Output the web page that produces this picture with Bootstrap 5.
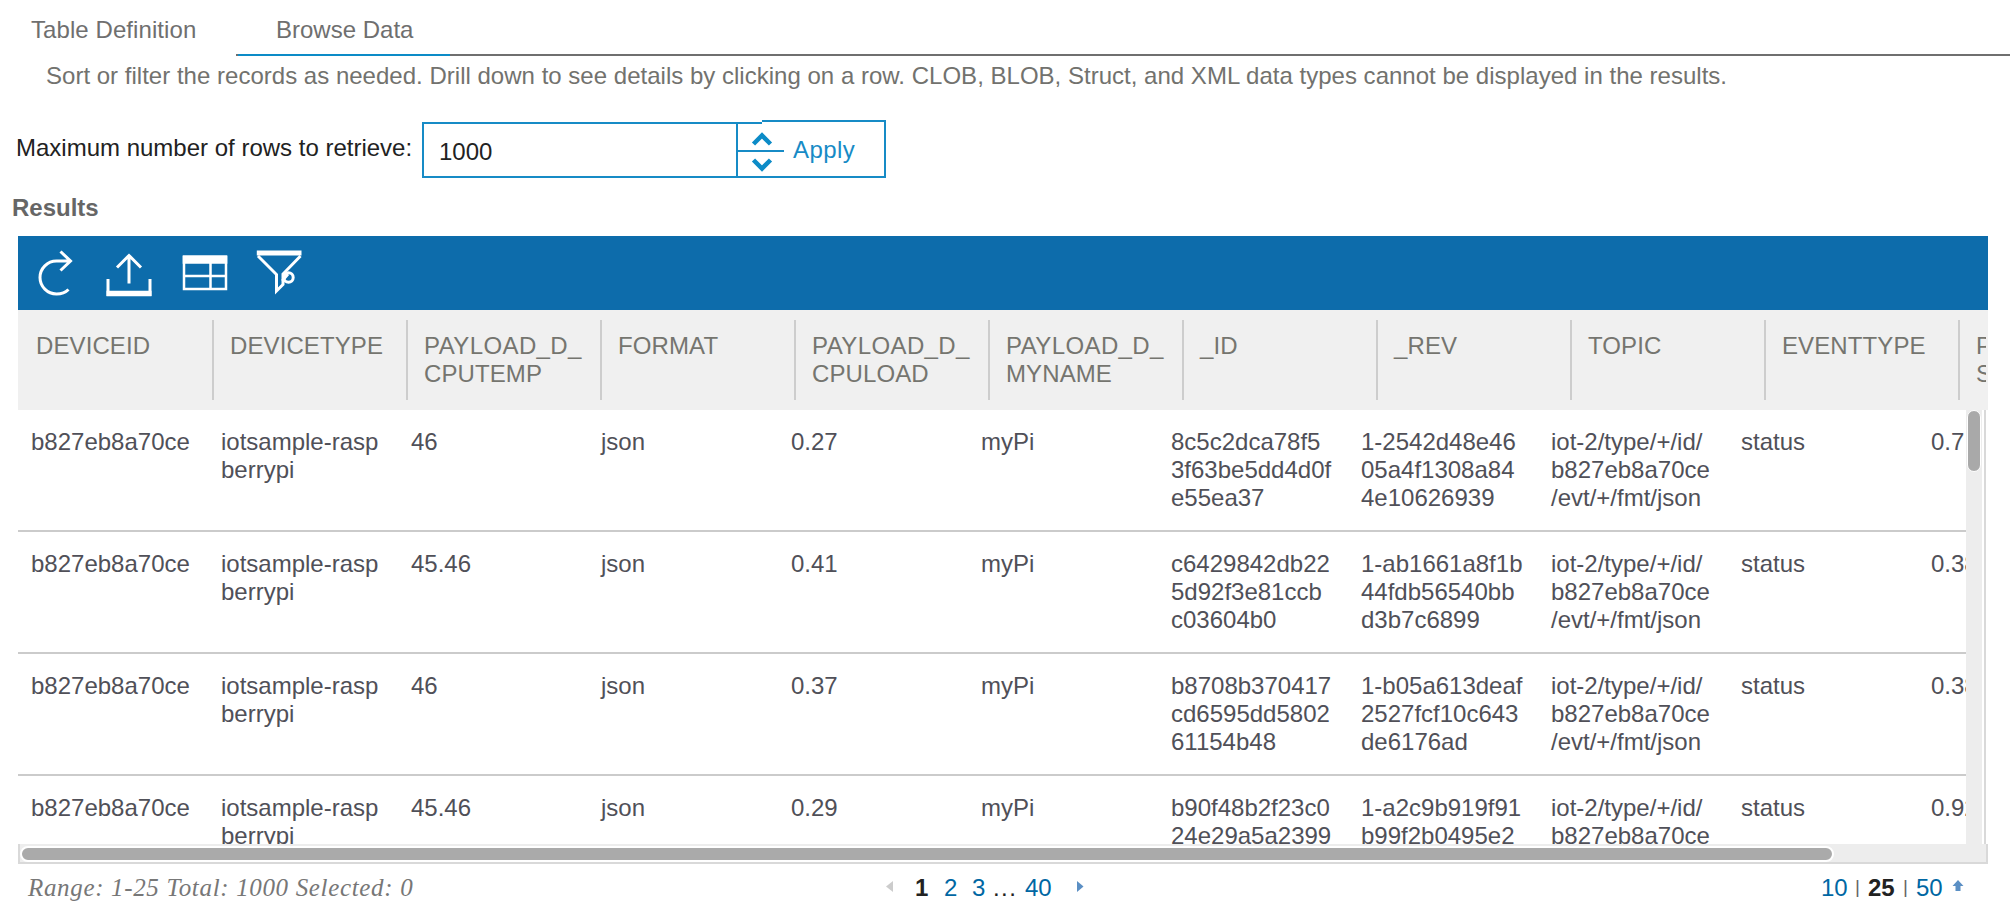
<!DOCTYPE html>
<html lang="en">
<head>
<meta charset="utf-8">
<title>Browse Data</title>
<link rel="stylesheet" href="https://cdn.jsdelivr.net/npm/bootstrap@5.3.0/dist/css/bootstrap.min.css">
<script src="https://cdn.jsdelivr.net/npm/bootstrap@5.3.0/dist/js/bootstrap.bundle.min.js"></script>
<style>
body{font-family:"Liberation Sans",Arial,sans-serif;font-size:24px;line-height:28px;color:#222;background:#fff;height:920px;overflow:hidden}
svg{display:block}
.tabbar{height:56px;--bs-nav-link-padding-x:0;--bs-nav-link-padding-y:0}
.tabbar .nav-link{color:#6f6f6f;font-size:24px;line-height:28px;height:56px;padding-top:16px}
.tab-def{width:236px;padding-left:31px!important;letter-spacing:.08px}
.tab-rest{border-bottom:2px solid #6f6f6f;padding-left:2px}
.tab-data{width:212px;border-bottom:2px solid #0c8bc7!important;padding-left:38px!important}
.hint{padding:6px 0 0 46px;color:#72726e;height:64px;white-space:nowrap;letter-spacing:.015px}
.retrieve{height:60px;padding-left:16px}
.retrieve label{width:406px;padding-top:14px;white-space:nowrap}
.num-box{width:316px;height:56px;margin-top:2px;border:2px solid #178bc6;border-radius:0;padding:4px 0 0 15px;font-size:24px;line-height:28px;color:#222}
.spinner-col{width:24px;height:56px;margin-top:2px;border:2px solid #178bc6;border-width:2px 0}
.btn-apply{width:124px;height:58px;border:2px solid #178bc6;border-left:0;border-radius:0;color:#178bc6;font-size:24px;line-height:28px;padding:1px 0 0 31px;text-align:left;letter-spacing:.4px}
.chev{position:absolute;left:736px;top:120px}
.results{font-size:24px;line-height:28px;color:#666;padding:14px 0 0 12px;height:56px}
.grid-panel{width:1970px;margin-left:18px}
.toolbar{height:74px;background:#0d6cab}
.grid-head{height:100px;background:#f0f0f0;padding:10px 0;width:1970px}
.head-clip{width:1968px;height:80px}
.head-cell{flex:0 0 194px;height:80px;padding:12px 0 0 16px;border-right:2px solid #cdcdcd;color:#75756f;white-space:nowrap;letter-spacing:.1px}
.wide-set{letter-spacing:.4px}
.head-cell:first-child{flex-basis:196px;padding-left:18px}
.grid-body{height:434px}
.rows{width:1948px}
.data-row{height:122px;border-bottom:2px solid #cbcbcb;padding:18px 0 0 13px;color:#505058}
.data-cell{flex:0 0 190px;white-space:nowrap}
.vtrack{width:16px;background:#ededed;padding:0 1px}
.vthumb{width:14px;height:62px;border:1px solid #fff;border-radius:7px;background:#a9a9a9}
.vedge{width:4px;border-right:2px solid #d9d9d9}
.htrack{height:20px;border:2px solid #d9d9d9;border-top:0;background:#ededed;padding-top:2px;background-clip:padding-box}
.hthumb{height:16px;width:1814px;border:2px solid #fff;border-radius:8px;background:#aaa}
.foot{height:52px;padding-top:10px;width:1970px}
.range{width:866px;padding-left:10px;font:italic 25px/28px "Liberation Serif",serif;color:#777;white-space:nowrap}
.range span{letter-spacing:.66px}
.pg{color:#0067a3;text-decoration:none}
.dots{letter-spacing:1.4px}
.sep{font-size:19px;line-height:26px;color:#666;width:13px}
.pager{width:937px}
</style>
</head>
<body>
<nav class="nav tabbar flex-nowrap">
  <a class="nav-link tab-def">Table Definition</a>
  <div class="tab-rest flex-grow-1"><a class="nav-link tab-data">Browse Data</a></div>
</nav>
<p class="hint mb-0">Sort or filter the records as needed. Drill down to see details by clicking on a row. CLOB, BLOB, Struct, and XML data types cannot be displayed in the results.</p>
<div class="retrieve d-flex">
  <label for="max">Maximum number of rows to retrieve:</label>
  <input id="max" class="form-control flex-shrink-0 num-box" value="1000">
  <div class="spinner-col"></div>
  <button class="btn btn-apply">Apply</button>
  <svg class="chev" width="50" height="58" fill="none" stroke="#0c8bc7"><path d="M0 31H48" stroke="#178bc6" stroke-width="2"/><path d="M17.500 24L26 15.500L34.500 24M17.500 40L26 48.500L34.500 40" stroke-width="4.500"/></svg>
</div>
<h2 class="results fw-bold mb-0">Results</h2>
<main class="grid-panel">
  <div class="toolbar">
    <svg width="320" height="74" fill="none" stroke="#fff" stroke-width="3">
      <path d="M50.500 53.500C47 57 43 58 38.500 58A16.500 16.500 0 0 1 38.500 25H52M42.500 15.500L52.500 25L42.500 34.500"/>
      <path d="M111 19V47.500M99 31.500L111 19.500L123 31.500M90 43V60M132 43V60"/><path d="M88.500 57.500H133.500" stroke-width="5.500"/>
      <path d="M166 20V53H208V20M166 40H208M192.500 27V53" stroke-width="2.500"/><path d="M164.700 23.500H209.300" stroke-width="8.500"/>
      <path d="M240 20L258.500 38.500V55L265 48.500V38L282.500 20M264 45L270 38"/><path d="M238.800 17H283.500" stroke-width="5"/><circle cx="270.500" cy="41.500" r="4.700"/>
    </svg>
  </div>
  <div class="grid-head"><div class="head-clip d-flex overflow-hidden" id="head"></div></div>
  <div class="grid-body d-flex overflow-hidden">
    <div class="rows overflow-hidden" id="rows"></div>
    <div class="vtrack"><div class="vthumb"></div></div>
    <div class="vedge"></div>
  </div>
  <div class="htrack"><div class="hthumb"></div></div>
  <footer class="foot d-flex">
    <div class="range"><span>Range: 1-25 Total: 1000 Selected: 0</span></div>
    <div class="pager d-flex">
      <svg width="31" height="28"><path d="M9 7V18L2 12.500Z" fill="#ccc"/></svg>
      <b style="width:29px">1</b><a class="pg" style="width:28px">2</a><a class="pg" style="width:21px">3</a><span class="dots" style="width:32px">...</span><a class="pg" style="width:51px">40</a>
      <svg width="10" height="28"><path d="M1 7V18L7.500 12.500Z" fill="#5b8fc4"/></svg>
    </div>
    <div class="d-flex">
      <a class="pg" style="width:34px">10</a><span class="sep">|</span><b style="width:35px">25</b><span class="sep">|</span><a class="pg" style="width:36px">50</a>
      <svg width="12" height="28"><path d="M6 6L11.500 12H8.500V17H3.500V12H.5Z" fill="#5b8fc4"/></svg>
    </div>
  </footer>
</main>
<script>
const cell = (cls, t) => `<div class="${cls}">${t}</div>`;
const pay = t => `<span class="wide-set">PAYLOAD_D_</span><br>${t}`;
document.getElementById('head').innerHTML =
  ['DEVICEID','DEVICETYPE',pay('CPUTEMP'),'FORMAT',pay('CPULOAD'),pay('MYNAME'),'_ID','_REV','TOPIC','EVENTTYPE','P<br>S']
  .map(t => cell('head-cell', t)).join('');
const dev = 'b827eb8a70ce', type = 'iotsample-rasp<br>berrypi', topic = 'iot-2/type/+/id/<br>b827eb8a70ce<br>/evt/+/fmt/json';
document.getElementById('rows').innerHTML = [
  ['46','0.27','8c5c2dca78f5<br>3f63be5dd4d0f<br>e55ea37','1-2542d48e46<br>05a4f1308a84<br>4e10626939','0.7'],
  ['45.46','0.41','c6429842db22<br>5d92f3e81ccb<br>c03604b0','1-ab1661a8f1b<br>44fdb56540bb<br>d3b7c6899','0.38'],
  ['46','0.37','b8708b370417<br>cd6595dd5802<br>61154b48','1-b05a613deaf<br>2527fcf10c643<br>de6176ad','0.38'],
  ['45.46','0.29','b90f48b2f23c0<br>24e29a5a2399','1-a2c9b919f91<br>b99f2b0495e2','0.92']
].map(([temp, load, id, rev, v]) => '<div class="data-row d-flex">' +
  [dev, type, temp, 'json', load, 'myPi', id, rev, topic, 'status', v].map(t => cell('data-cell', t)).join('') + '</div>').join('');
</script>
</body>
</html>
